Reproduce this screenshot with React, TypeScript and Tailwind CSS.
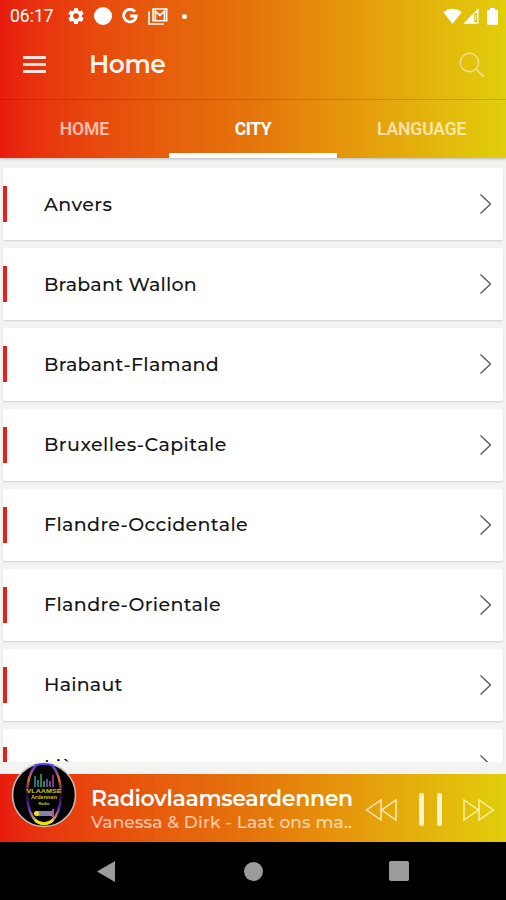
import { useState } from "react";

const tabs = ["HOME", "CITY", "LANGUAGE"];

const cities = [
  { name: "Anvers", spacing: "pt-[2px] tracking-[0.4px]" },
  { name: "Brabant Wallon", spacing: "pt-[2px] tracking-[0.2px]" },
  { name: "Brabant-Flamand", spacing: "pt-[2px] tracking-[0.27px]" },
  { name: "Bruxelles-Capitale", spacing: "pt-[2px] tracking-[0.45px]" },
  { name: "Flandre-Occidentale", spacing: "pt-[1px] tracking-[0.35px]" },
  { name: "Flandre-Orientale", spacing: "pt-[1px] tracking-[0.37px]" },
  { name: "Hainaut", spacing: "pt-[1px] tracking-[0.2px]" },
  { name: "Liège", spacing: "pt-[4px] tracking-[0.35px]" },
];

function StatusBar() {
  return (
    <div className="flex h-8 items-center pl-[10px] pr-[8px] text-white">
      <span className="w-[57px] font-[Roboto] text-[17.5px] leading-8">06:17</span>
      <svg className="h-[18px] w-[18px]" viewBox="0 0 24 24" fill="currentColor">
        <path
          fillRule="evenodd"
          d="M9.5 1.5h5l.6 3.1 1.6.9 3-1 2.5 4.3-2.4 2.1v2.2l2.4 2.1-2.5 4.3-3-1-1.6.9-.6 3.1h-5l-.6-3.1-1.6-.9-3 1-2.5-4.3 2.4-2.1v-2.2L1.8 8.8l2.5-4.3 3 1 1.6-.9zM12 8.2a3.8 3.8 0 1 0 0 7.6 3.8 3.8 0 0 0 0-7.6z"
        />
      </svg>
      <span className="ml-[9px] h-[18px] w-[18px] rounded-full bg-white" />
      <svg className="ml-[10px] h-4 w-4" viewBox="0 0 16 16" fill="none" stroke="currentColor" strokeWidth="2.8">
        <path d="M13 3.7A6.3 6.3 0 1 0 14.3 8H8.3" />
      </svg>
      <svg className="ml-[10px] h-[17px] w-5" viewBox="0 0 20 17" fill="none" stroke="currentColor">
        <path d="M1 3.5V16h15" strokeWidth="1.6" />
        <path d="M5 1h13.7v11.7H5z" strokeWidth="1.5" />
        <path d="M7.3 12.5V3.2l4.6 4 4.6-4v9.3" strokeWidth="1.8" />
      </svg>
      <span className="ml-[14px] h-[5px] w-[5px] rounded-full bg-white" />
      <svg className="ml-auto h-4 w-[19px]" viewBox="0 0 19 16" fill="currentColor">
        <path d="M.3 4.3C5.5-.3 13.5-.3 18.7 4.3L9.5 15.7z" />
      </svg>
      <svg className="ml-[1px] h-4 w-4" viewBox="0 0 16 16">
        <path d="M15.5.3v15.4H.3z" fill="currentColor" />
        <path d="M11.3 5.5H14v8.7h-2.7z" fill="#e0ae0b" />
        <path d="M12.2 7h1v5.5h-1z" fill="currentColor" />
      </svg>
      <svg className="ml-2 h-[17px] w-[11px]" viewBox="0 0 11 17" fill="currentColor">
        <path d="M3 0h5v2h2.2l.8.8V16l-.8.8H.8L0 16V2.8L.8 2H3z" />
      </svg>
    </div>
  );
}

function StationLogo() {
  return (
    <svg className="absolute left-[11px] -top-[12px] h-[66px] w-[66px]" viewBox="0 0 66 66" fill="none">
      <defs>
        <linearGradient id="ring" x1="0" y1="0" x2="0" y2="1">
          <stop offset="0" stopColor="#4a38e8" />
          <stop offset=".25" stopColor="#e56a32" />
          <stop offset=".5" stopColor="#1a0d38" />
          <stop offset=".75" stopColor="#7030c0" />
          <stop offset="1" stopColor="#f0e010" />
        </linearGradient>
      </defs>
      <circle cx="33" cy="33" r="31.5" fill="#030305" stroke="#c9c2bf" strokeWidth="1.5" />
      <path d="M25 3C13 17 13 48 26 60q7 4 14 0C53 48 53 17 41 3" stroke="url(#ring)" strokeWidth="2.5" />
      <path d="M24 3.5q9-3 18 0" stroke="#5144ed" strokeWidth="2" />
      <path d="M24 58q9 7 18 0" stroke="#f1e313" strokeWidth="2.5" />
      <path d="M24 25V14M27 25v-7" stroke="#2b7f8c" strokeWidth="1.8" />
      <path d="M30 25V12M33 25v-6" stroke="#31963d" strokeWidth="1.8" />
      <path d="M36 25v-8M39 25v-6" stroke="#5554b0" strokeWidth="1.8" />
      <path d="M42 25V13" stroke="#a33480" strokeWidth="1.8" />
      <g fill="#c7c51d" fontFamily="Liberation Sans" fontWeight="bold" textAnchor="middle">
        <text x="33" y="31" fontSize="6" textLength="35" lengthAdjust="spacingAndGlyphs">
          VLAAMSE
        </text>
        <text x="33" y="37" fontSize="5.5" textLength="26" lengthAdjust="spacingAndGlyphs">
          Ardennen
        </text>
        <text x="33" y="43" fontSize="4">
          Radio
        </text>
      </g>
      <rect x="24" y="49" width="19" height="5" rx="2.5" fill="#8980b0" />
      <circle cx="25.5" cy="51.5" r="2.5" fill="#eee12c" />
      <path d="M42 47v8" stroke="#b35191" strokeWidth="2" />
    </svg>
  );
}

function PlayerBar() {
  return (
    <div className="relative flex h-[68px] shrink-0 items-center bg-linear-to-r from-[#e81b0e] via-[#e4750b] to-[#e0ce0b] pl-[91px]">
      <StationLogo />
      <div className="mt-[3px] w-[264px] whitespace-nowrap font-['Montserrat',Inter,sans-serif]">
        <p className="text-[22px] font-semibold leading-[25px] tracking-[-0.33px] text-white">Radiovlaamseardennen</p>
        <p className="text-[17px] font-medium leading-[22px] tracking-[0.15px] text-white/65">
          Vanessa &amp; Dirk - Laat ons ma..
        </p>
      </div>
      <svg className="ml-[10px] mt-[3px] h-[24px] w-[32px]" viewBox="0 0 32 24" fill="none" stroke="#fff2c9" strokeWidth="1.3">
        <path d="M16 2v20L1.5 12zM31 2v20L16.5 12z" />
      </svg>
      <div className="ml-[22px] mt-[3px] flex gap-[13px]">
        <span className="h-[33px] w-[5px] rounded-xs bg-[#fff2d0]" />
        <span className="h-[33px] w-[5px] rounded-xs bg-[#fff2d0]" />
      </div>
      <svg className="ml-[21px] mt-[3px] h-[24px] w-[32px]" viewBox="0 0 32 24" fill="none" stroke="#fff5b8" strokeWidth="1.3">
        <path d="M1 2v20l14.5-10zM16 2v20l14.5-10z" />
      </svg>
    </div>
  );
}

export default function App() {
  const [activeTab, setActiveTab] = useState("CITY");

  return (
    <div className="flex h-[900px] w-[506px] flex-col overflow-hidden bg-[#f3f3f2]">
      {/* Header */}
      <header className="z-10 h-[158px] shrink-0 bg-linear-to-r from-[#e81b0e] via-[#e4750b] to-[#e0ce0b] shadow-[0_1px_3px_rgba(0,0,0,0.25)]">
        <StatusBar />
        <div className="flex h-[68px] items-center border-b border-black/15 pb-[2px] pl-[23px] pr-[21px]">
          <button className="flex w-[23px] flex-col gap-[4px]">
            <span className="h-[3px] w-full bg-white/85" />
            <span className="h-[3px] w-full bg-white/85" />
            <span className="h-[3px] w-full bg-white/85" />
          </button>
          <h1 className="ml-[43px] font-['Montserrat',Inter,sans-serif] text-[25px] font-semibold tracking-[-0.5px] text-white/95">
            Home
          </h1>
          <svg className="ml-auto h-[26px] w-[26px]" viewBox="0 0 26 26" fill="none" stroke="#f4df94" strokeWidth="1.4">
            <circle cx="10.5" cy="10.5" r="9.2" />
            <path d="M17 17l8 8" strokeWidth="1.7" />
          </svg>
        </div>
        <nav className="grid h-[58px] grid-cols-3">
          {tabs.map((tab) => (
            <button
              key={tab}
              onClick={() => setActiveTab(tab)}
              className={
                tab === activeTab
                  ? "border-b-[5px] border-white pt-[5px] font-[Roboto] text-[17.5px] font-bold tracking-[-0.4px] text-white"
                  : "border-b-[5px] border-transparent pt-[5px] font-[Roboto] text-[17.5px] font-semibold tracking-[-0.1px] text-white/65"
              }
            >
              {tab}
            </button>
          ))}
        </nav>
      </header>

      {/* City list */}
      <main className="mb-[12.5px] flex min-h-0 flex-1 flex-col gap-2 overflow-hidden px-[3px] pt-[10px]">
        {cities.map((city) => (
          <div
            key={city.name}
            className="flex h-[72.2px] shrink-0 items-center rounded-xs bg-white pr-[11px] shadow-[0_1px_2px_rgba(0,0,0,0.14)]"
          >
            <span className="h-9 w-[4px] bg-[#e5211d]" />
            <span
              className={`ml-[37px] font-['Montserrat',Inter,sans-serif] text-[19px] font-medium text-[#151515] ${city.spacing}`}
            >
              {city.name}
            </span>
            <svg className="ml-auto h-[22px] w-[13px]" viewBox="0 0 13 22" fill="none" stroke="#5b5b5b" strokeWidth="1.4">
              <path d="M1.5 1.5L11.5 11l-10 9.5" />
            </svg>
          </div>
        ))}
      </main>

      <PlayerBar />

      {/* Android navigation */}
      <footer className="flex h-[58px] shrink-0 items-center bg-black pl-[97px]">
        <svg className="h-[21px] w-[18px]" viewBox="0 0 18 21" fill="#9b9b9b">
          <path d="M18 0v21L0 10.5z" />
        </svg>
        <span className="ml-[129px] h-[19px] w-[19px] rounded-full bg-[#9b9b9b]" />
        <span className="ml-[126px] h-[20px] w-[20px] rounded-xs bg-[#9b9b9b]" />
      </footer>
    </div>
  );
}
